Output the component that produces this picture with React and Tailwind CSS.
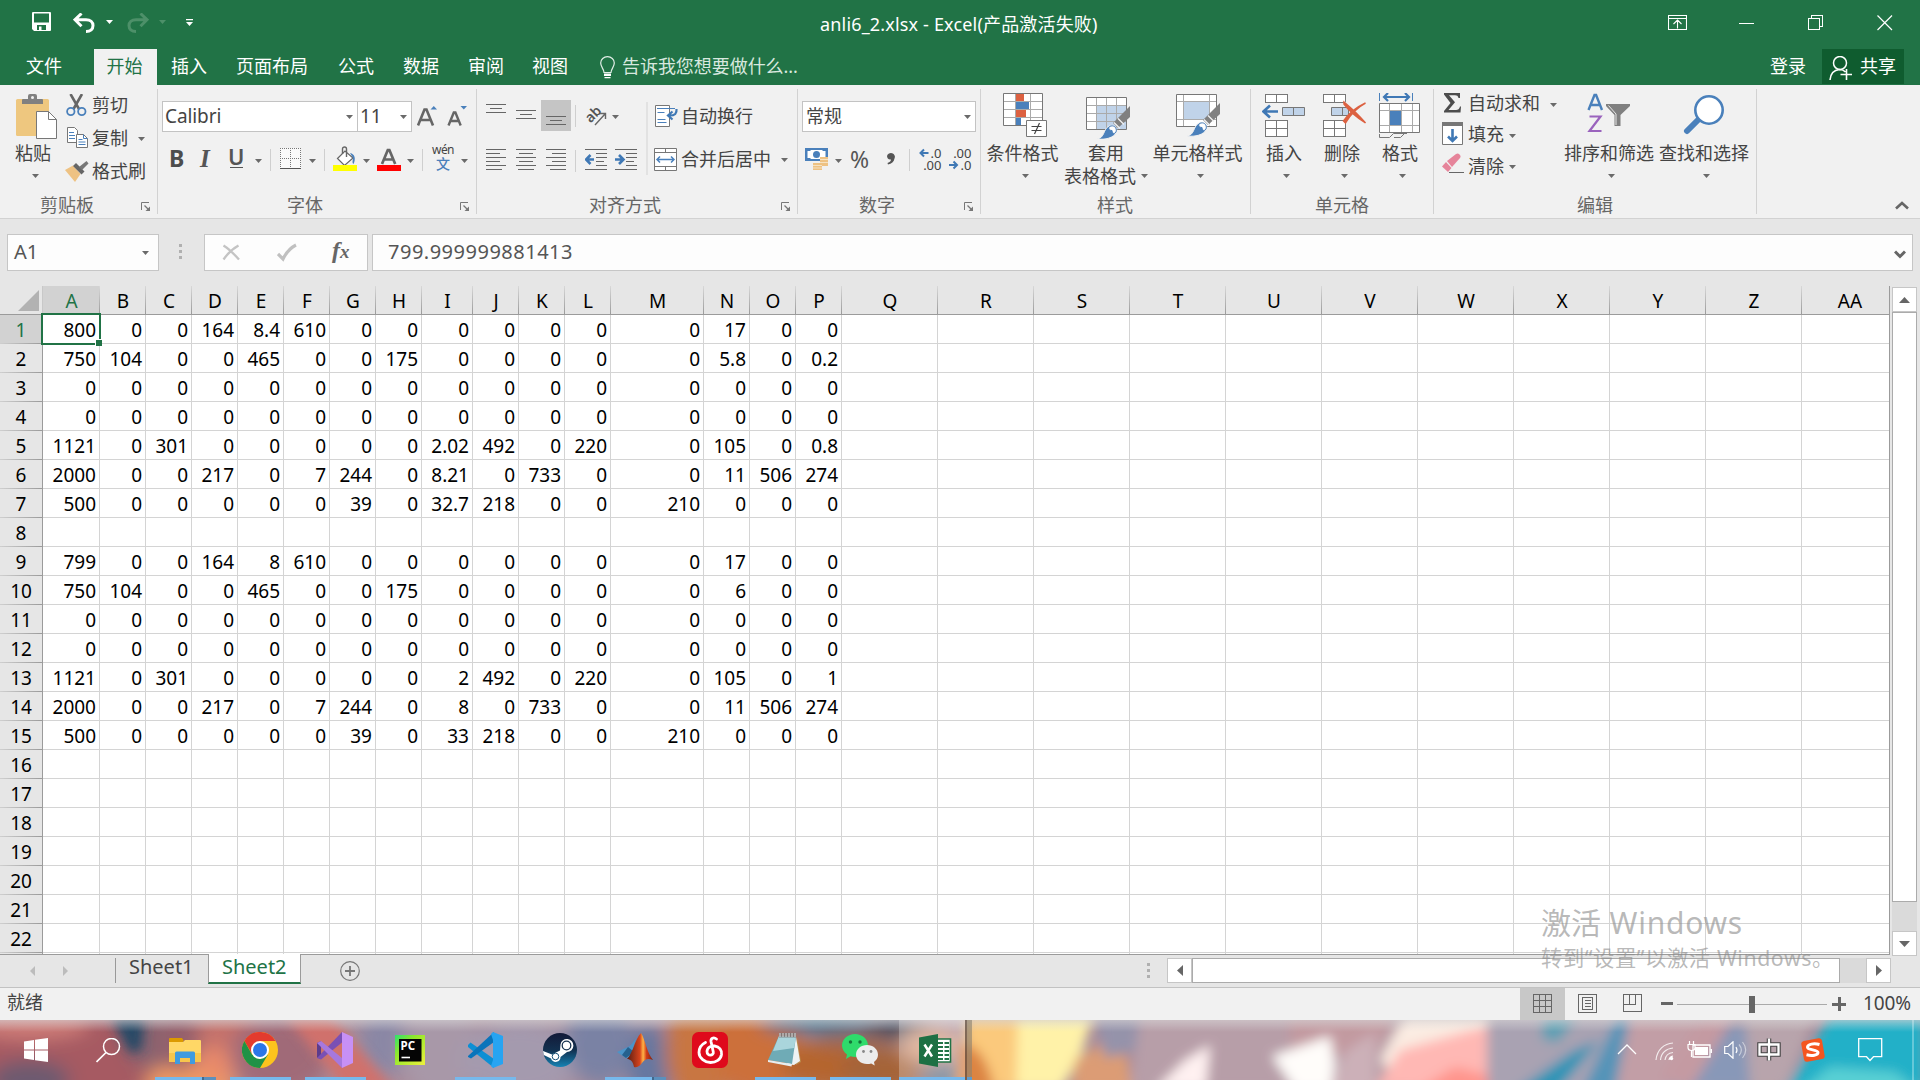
import React from "react";

const UI = "font-['Noto_Sans','Noto_Sans_CJK_SC',sans-serif]";

const columns = [
  ["A", "w-[57px]"], ["B", "w-[46px]"], ["C", "w-[46px]"], ["D", "w-[46px]"], ["E", "w-[46px]"],
  ["F", "w-[46px]"], ["G", "w-[46px]"], ["H", "w-[46px]"], ["I", "w-[51px]"], ["J", "w-[46px]"],
  ["K", "w-[46px]"], ["L", "w-[46px]"], ["M", "w-[93px]"], ["N", "w-[46px]"], ["O", "w-[46px]"],
  ["P", "w-[46px]"], ["Q", "w-[96px]"], ["R", "w-[96px]"], ["S", "w-[96px]"], ["T", "w-[96px]"],
  ["U", "w-[96px]"], ["V", "w-[96px]"], ["W", "w-[96px]"], ["X", "w-[96px]"], ["Y", "w-[96px]"],
  ["Z", "w-[96px]"], ["AA", "w-[96px]"],
];

const data = [
  "800 0 0 164 8.4 610 0 0 0 0 0 0 0 17 0 0",
  "750 104 0 0 465 0 0 175 0 0 0 0 0 5.8 0 0.2",
  "0 0 0 0 0 0 0 0 0 0 0 0 0 0 0 0",
  "0 0 0 0 0 0 0 0 0 0 0 0 0 0 0 0",
  "1121 0 301 0 0 0 0 0 2.02 492 0 220 0 105 0 0.8",
  "2000 0 0 217 0 7 244 0 8.21 0 733 0 0 11 506 274",
  "500 0 0 0 0 0 39 0 32.7 218 0 0 210 0 0 0",
  "",
  "799 0 0 164 8 610 0 0 0 0 0 0 0 17 0 0",
  "750 104 0 0 465 0 0 175 0 0 0 0 0 6 0 0",
  "0 0 0 0 0 0 0 0 0 0 0 0 0 0 0 0",
  "0 0 0 0 0 0 0 0 0 0 0 0 0 0 0 0",
  "1121 0 301 0 0 0 0 0 2 492 0 220 0 105 0 1",
  "2000 0 0 217 0 7 244 0 8 0 733 0 0 11 506 274",
  "500 0 0 0 0 0 39 0 33 218 0 0 210 0 0 0",
  "", "", "", "", "", "", "", "",
].map((r) => (r ? r.split(" ") : []));

function Svg({ w, h, className = "", children, crisp }) {
  return (
    <svg width={w} height={h} viewBox={`0 0 ${w} ${h}`} fill="none" className={`block shrink-0 ${className}`} shapeRendering={crisp ? "crispEdges" : "auto"}>
      {children}
    </svg>
  );
}

const Caret = ({ className = "", color = "#6a6a6a" }) => (
  <Svg w={7} h={4} className={className}><path d="M0 0h7L3.500 4z" fill={color} /></Svg>
);

const Launcher = ({ className = "" }) => (
  <Svg w={10} h={10} className={className}>
    <path d="M.5 8V.5H8" stroke="#777" />
    <path d="M3.500 3.500l4 4" stroke="#777" strokeWidth="1.200" />
    <path d="M9 4.500V9H4.500z" fill="#777" />
  </Svg>
);

/* ---------- Title bar ---------- */
function TitleBar() {
  return (
    <div className="flex h-[49px] items-start text-white">
      <Svg w={19} h={19} className="mt-3 ml-8">
        <path d="M1 0h17a1 1 0 0 1 1 1v17a1 1 0 0 1-1 1H2l-2-2V1a1 1 0 0 1 1-1z" fill="#fff" />
        <path d="M2 1.500h15v9H2zM5 13h9v5H9.500v-3.500H7V18H5z" fill="#217346" />
      </Svg>
      <Svg w={22} h={20} className="mt-[13px] ml-[22px]">
        <path d="M8.500 .5 2 6.700l6.500 6.500M2.500 6.700H13c4.500 0 7 2.500 7 5.800 0 3.500-2.500 6-7 6" stroke="#fff" strokeWidth="3" />
      </Svg>
      <Caret className="mt-5 ml-[11px]" color="#fff" />
      <Svg w={22} h={20} className="mt-[13px] ml-[14px]">
        <path d="M13.500 .5 20 6.700l-6.500 6.500M19.500 6.700H9C4.500 6.700 2 9.200 2 12.500c0 3.500 2.500 6 7 6" stroke="#4d9069" strokeWidth="3" />
      </Svg>
      <Caret className="mt-5 ml-[10px]" color="#4d9069" />
      <Svg w={8} h={8} className="mt-[19px] ml-5"><path d="M0 0h7v1.300H0zM0 3h7L3.500 7z" fill="#fff" /></Svg>
      <div className="ml-[626px] mt-[9px] w-[277px] whitespace-nowrap text-[18px] leading-[30px] tracking-[0.17px]">anli6_2.xlsx - Excel(产品激活失败)</div>
      <Svg w={19} h={15} className="mt-[15px] ml-[571px]">
        <path d="M.5.5h18v14H.5zM.5 3.500h18M9.500 13.500V5.500M5.500 9l4-4 4 4" stroke="#fff" strokeWidth="1.100" />
      </Svg>
      <Svg w={15} h={15} className="mt-[15px] ml-[52px]" crisp><path d="M0 8.500h15" stroke="#fff" /></Svg>
      <Svg w={16} h={16} className="mt-[15px] ml-[54px]" crisp>
        <path d="M.5 3.500h11v11H.5zM3.500 3.500v-3h11v11h-3" stroke="#fff" />
      </Svg>
      <Svg w={16} h={16} className="mt-[15px] ml-[53px]"><path d="M.5.5l14.500 14.500M15 .5.5 15" stroke="#fff" strokeWidth="1.200" /></Svg>
    </div>
  );
}

function TabBar() {
  return (
    <div className="flex h-9 text-[18px] leading-[34px] whitespace-nowrap text-white">
      <div className="w-[94px] pl-[26px]">文件</div>
      <div className="w-[63px] bg-[#f1f1f1] pr-[2px] text-center text-[#217346]">开始</div>
      <div className="flex pl-[14px]">
        <div className="w-[65px]">插入</div>
        <div className="w-[102px]">页面布局</div>
        <div className="w-[65px]">公式</div>
        <div className="w-[65px]">数据</div>
        <div className="w-[64px]">审阅</div>
        <div className="w-[68px]">视图</div>
      </div>
      <Svg w={15} h={23} className="mt-[7px]">
        <path d="M4 16.500c0-3.500-3.300-5.500-3.300-9.500a6.800 6.300 0 0 1 13.600 0c0 4-3.300 6-3.300 9.500z" stroke="#e3efe8" strokeWidth="1.200" />
        <path d="M4 17.500h7v2.500H4zM4.500 21h6v1.300h-6z" fill="#fff" />
      </Svg>
      <div className="ml-[7px] w-[1148px] tracking-[-0.05px] text-[#d8e8df]">告诉我您想要做什么...</div>
      <div className="w-[52px]">登录</div>
      <div className="flex h-[35px] w-[82px] bg-[#0f5c2f] pl-[7px]">
        <Svg w={24} h={25} className="mt-[7px]">
          <circle cx="11" cy="7" r="6.500" stroke="#fff" strokeWidth="1.500" />
          <path d="M1 24c.5-6.500 4-10 9.500-10.500 3 0 4.500.8 6 2.500M17.500 13v11M11.500 18.500H23" stroke="#fff" strokeWidth="1.600" />
        </Svg>
        <span className="ml-[7px]">共享</span>
      </div>
    </div>
  );
}

/* ---------- Ribbon ---------- */
function Group({ w, label, labelPad, launcher, children }) {
  return (
    <div className={`${w} flex h-[133px] shrink-0`}>
      <div className="flex min-w-0 flex-1 flex-col">
        <div className="h-[107px]">{children}</div>
        <div className="flex h-[26px] text-[18px] leading-[26px] text-[#666]">
          <span className={`${labelPad} flex-1 whitespace-nowrap`}>{label}</span>
          {launcher && <Launcher className="mt-[10px] mr-[6px]" />}
        </div>
      </div>
      <div className="mt-1 h-[125px] w-px bg-[#d2d2d2]" />
    </div>
  );
}

const VSep = ({ className = "" }) => <div className={`w-px bg-[#cfcfcf] ${className}`} />;

function Clipboard() {
  return (
    <Group w="w-[158px]" label="剪贴板" labelPad="pl-[40px]" launcher>
      <div className="flex">
        <div className="w-[65px] pl-[15px]">
          <Svg w={43} h={46} className="mt-[9px]">
            <rect x="1" y="5" width="33" height="37" rx="1.500" fill="#eec77f" />
            <path d="M7 10V6a1 1 0 0 1 1-1h5V2a2 2 0 0 1 2-2h5a2 2 0 0 1 2 2v3h5a1 1 0 0 1 1 1v4z" fill="#808080" />
            <circle cx="17.500" cy="3.500" r="1.500" fill="#f1f1f1" />
            <path d="M21.500 17.500h12l8 8v19h-20z" fill="#fff" stroke="#777" />
            <path d="M33.500 17.500v8h8" stroke="#777" />
          </Svg>
          <div className="text-[18px] leading-[26px] whitespace-nowrap">粘贴</div>
          <Caret className="mt-[8px] ml-[17px]" />
        </div>
        <div className="pt-[4px] text-[18px] leading-[33px] whitespace-nowrap">
          <div className="flex h-[33px]">
            <Svg w={27} h={24} className="mt-[5px]">
              <path d="M5.500 0 14 15M17 0 8.500 15" stroke="#666" strokeWidth="2.600" />
              <circle cx="5.800" cy="17.500" r="3.700" stroke="#4a80bb" strokeWidth="1.800" />
              <circle cx="16.800" cy="17.500" r="3.700" stroke="#4a80bb" strokeWidth="1.800" />
            </Svg>剪切
          </div>
          <div className="flex h-[33px]">
            <Svg w={27} h={24} className="mt-[4px]">
              <path d="M2.500 1.500h7l3 3v12h-10z" fill="#fff" stroke="#777" />
              <path d="M4 6.500h5M4 9.500h6M4 12.500h6" stroke="#4a80bb" />
              <path d="M11.500 8.500h7l4 4v9h-11z" fill="#fff" stroke="#777" />
              <path d="M18.500 8.500v4h4M13.500 13.500h4M13.500 16h7M13.500 18.500h7" stroke="#4a80bb" />
            </Svg>复制<Caret className="mt-[15px] ml-[10px]" />
          </div>
          <div className="flex h-[33px]">
            <Svg w={27} h={24} className="mt-[5px]">
              <path d="M0 10l8-4.500L15.500 14 10 22z" fill="#eec283" />
              <path d="M8 6l3-3 8.500 8.500-3 3z" fill="#666" />
              <path d="M14 7l7.500-6 2 2.500L17 10z" fill="#777" />
            </Svg>格式刷
          </div>
        </div>
      </div>
    </Group>
  );
}

function FontGroup() {
  return (
    <Group w="w-[319px]" label="字体" labelPad="pl-[129px]" launcher>
      <div className="flex pt-4 pl-1">
        <div className="flex h-[31px] w-[196px] border border-[#c3c3c3] bg-white text-[19px] leading-[28px]">
          <span className="w-[183px] pl-[2px] tracking-[-0.1px]">Calibri</span><Caret className="mt-[13px]" />
        </div>
        <div className="-ml-px flex h-[31px] w-[55px] border border-[#c3c3c3] bg-white text-[19px] leading-[28px]">
          <span className="w-[42px] pl-[2px]">11</span><Caret className="mt-[13px]" />
        </div>
        <Svg w={21} h={24} className="mt-[3px] ml-[5px]">
          <path d="M1 21.500 7.500 5.500h2L16 21.500M3.500 16h10" stroke="#666" strokeWidth="2.600" /><path d="M13.500 5.500h6.500l-3.200-3.500z" fill="#4a80bb" />
        </Svg>
        <Svg w={21} h={24} className="mt-[3px] ml-[9px]">
          <path d="M1.500 21.500 6.800 8.500h1.600L13.700 21.500M4 17h7.500" stroke="#666" strokeWidth="2.400" /><path d="M13.500 2h6.500l-3.200 3.500z" fill="#4a80bb" />
        </Svg>
      </div>
      <div className="flex h-10 items-start pt-[12px] pl-[11px]">
        <div className="w-[31px] font-['Noto_Sans'] text-[23px] leading-[28px] font-bold text-[#4d4d4d]">B</div>
        <div className="w-[28px] font-['Liberation_Serif'] text-[25px] leading-[29px] font-bold italic text-[#555]">I</div>
        <div className="w-[28px] border-[#555]">
          <div className="w-[16px] text-[22px] leading-[25px] font-semibold text-[#555]">U</div>
          <div className="-mt-[2px] ml-[2px] h-px w-[13px] bg-[#555]" />
        </div>
        <Caret className="mt-[15px] -ml-px" />
        <VSep className="mt-[5px] ml-[8px] h-[22px]" />
        <Svg w={22} h={22} className="mt-[4px] ml-[9px]" crisp>
          <rect x="0" y="0" width="21" height="21" fill="#fafafa" />
          <path d="M0 .5h21M0 10.500h21M.5 0v21M10.500 0v21M20.500 0v21" stroke="#777" strokeDasharray="1 1" />
          <path d="M0 20.500h21" stroke="#555" />
        </Svg>
        <Caret className="mt-[15px] ml-[7px]" />
        <VSep className="mt-[5px] ml-[8px] h-[22px]" />
        <Svg w={24} h={26} className="mt-[2px] ml-[8px]">
          <path d="M4.500 12.500 12 5l8 7-8.500 7.500z" fill="#fff" stroke="#666" strokeWidth="1.200" />
          <path d="M9.500 8V3a2 2 0 0 1 4 0v8" stroke="#666" strokeWidth="1.400" />
          <path d="M17 7c5 1 6 6 3.500 11-1.800-1.500-.5-4-.5-6z" fill="#4a80bb" />
          <rect y="19" width="24" height="6" fill="#ff0" />
        </Svg>
        <Caret className="mt-[15px] ml-[6px]" />
        <Svg w={24} h={26} className="mt-[2px] ml-[7px]">
          <path d="M5 18 10.800 4h1.600L18.200 18M7.500 13.500h8.500" stroke="#666" strokeWidth="2.700" />
          <rect y="19" width="24" height="6" fill="#f00" />
        </Svg>
        <Caret className="mt-[15px] ml-[6px]" />
        <VSep className="mt-[5px] ml-[8px] h-[22px]" />
        <div className="-mt-px ml-[8px] flex w-[24px] flex-col items-center text-[12px] leading-[14px] text-[#444]">
          <span className="tracking-[-0.6px]">wén</span>
          <span className="text-[14px] leading-[13px] font-medium text-[#4a80bb]">文</span>
        </div>
        <Caret className="mt-[15px] ml-[6px]" />
      </div>
    </Group>
  );
}

const threeLines = [[0, 20], [4, 12], [0, 20]];

function Lines({ y0, gap, rows, w = 20, h = 31, className = "" }) {
  return (
    <Svg w={w} h={h} className={className} crisp>
      {rows.map(([x, len], i) => <rect key={i} x={x} y={y0 + gap * i} width={len} height="1" fill="#666" />)}
    </Svg>
  );
}

function AlignGroup() {
  return (
    <Group w="w-[321px]" label="对齐方式" labelPad="pl-[112px]" launcher>
      <div className="flex">
        <div className="w-[169px]">
          <div className="flex pt-[15px] pl-[9px]">
            <Lines y0={4} gap={4} rows={threeLines} />
            <Lines y0={10} gap={4} rows={threeLines} className="ml-[10px]" />
            <div className="ml-[5px] w-[30px] bg-[#c5c5c5] pl-[5px]"><Lines y0={16} gap={4} rows={threeLines} /></div>
            <VSep className="mt-[5px] ml-[4px] h-[22px]" />
            <Svg w={21} h={22} className="mt-[4px] ml-[10px] overflow-visible">
              <text x="-2" y="14" transform="rotate(-45 8 9)" fontSize="14" fontFamily="Noto Sans" fontWeight="600" fill="#555">ab</text>
              <path d="M9 21 19 10M19.500 15V9.500H14" stroke="#666" strokeWidth="1.400" />
            </Svg>
            <Caret className="mt-[15px] ml-[5px]" />
          </div>
          <div className="flex pt-[18px] pl-[9px]">
            <Lines h={22} y0={0} gap={4} rows={[[0, 20], [0, 14], [0, 20], [0, 14], [0, 20], [0, 16]]} />
            <Lines h={22} y0={0} gap={4} rows={[[0, 20], [3, 14], [0, 20], [3, 14], [0, 20], [2, 16]]} className="ml-[10px]" />
            <Lines h={22} y0={0} gap={4} rows={[[0, 20], [6, 14], [0, 20], [6, 14], [0, 20], [4, 16]]} className="ml-[10px]" />
            <VSep className="mt-[1px] ml-[9px] h-[22px]" />
            <div className="ml-[9px] flex">
              {["M9 10.500H1M5.500 6 1 10.500 5.500 15", "M0 10.500h8M4 6l4.500 4.500L4 15"].map((d, i) => (
                <Svg key={i} w={22} h={22} className="mr-2">
                  <path d="M0 .5h22M11 4.500h11M11 8.500h11M11 12.500h8M11 16.500h11M0 20.500h22" stroke="#666" />
                  <path d={d} stroke="#3f78b5" strokeWidth="2.600" />
                </Svg>
              ))}
            </div>
          </div>
        </div>
        <div className="mt-[17px] h-[73px] w-[2px] bg-[#e2e2e2]" />
        <div className="pl-[6px] text-[18px] leading-[31px] whitespace-nowrap">
          <div className="flex pt-[16px]">
            <Svg w={27} h={24} className="mt-[4px]">
              <path d="M1.500.5h14v21h-14z" fill="#fff" stroke="#777" />
              <path d="M3 3.500h18M3.500 7.500h7M3.500 14.500h8M3.500 17.500h9" stroke="#4a80bb" />
              <path d="M22.500 4c.5 4.500-1.500 6.500-7 6.500M18.500 6.500l-4.500 4 4.500 4" stroke="#3f78b5" strokeWidth="2.200" />
            </Svg>自动换行
          </div>
          <div className="flex pt-[11px]">
            <Svg w={27} h={24} className="mt-[5px]">
              <path d="M.5.5h22v22H.5z" fill="#fff" stroke="#777" />
              <path d="M.5 4.500h22M.5 18.500h22M11.500.5v4M11.500 18.500v4" stroke="#777" />
              <path d="M3 11.500h17M6 8.500l-3 3 3 3M17 8.500l3 3-3 3" stroke="#4a80bb" strokeWidth="1.500" />
            </Svg><span className="pt-px">合并后居中</span><Caret className="mt-[15px] ml-[10px]" />
          </div>
        </div>
      </div>
    </Group>
  );
}

function DecIcon({ top, bottom, arrow, arrowY, className = "" }) {
  return (
    <Svg w={23} h={24} className={`overflow-visible ${className}`}>
      <text x="22.500" y="9.500" textAnchor="end" fontSize="13" fontFamily="Noto Sans" fill="#444">{top}</text>
      <text x="22.500" y="22" textAnchor="end" fontSize="13" fontFamily="Noto Sans" fill="#444">{bottom}</text>
      <path d={arrow} transform={`translate(0 ${arrowY})`} stroke="#3f78b5" strokeWidth="2" />
    </Svg>
  );
}

function NumberGroup() {
  return (
    <Group w="w-[183px]" label="数字" labelPad="pl-[61px]" launcher>
      <div className="pt-4 pl-1">
        <div className="flex h-[31px] w-[174px] border border-[#c3c3c3] bg-white text-[18px] leading-[28px]">
          <span className="w-[161px] pl-[3px]">常规</span><Caret className="mt-[13px]" />
        </div>
      </div>
      <div className="flex pt-[16px] pl-[7px]">
        <Svg w={24} h={24}>
          <rect width="23" height="13" fill="#4a80bb" /><path d="M2.500 3h3V2h12v1h3v7h-3v1h-12v-1h-3z" fill="#fff" /><circle cx="11.500" cy="6.500" r="3.500" fill="#4a80bb" />
          <path d="M15 9h8v9h-8z" fill="#eec283" /><path d="M8 15h9v7H8z" fill="#eec283" />
          <path d="M15 11.500h8M15 14.500h8M8 17.500h9M8 20h9" stroke="#f8ead2" strokeWidth=".8" />
        </Svg>
        <Caret className="mt-[11px] ml-[6px]" />
        <div className="-mt-[3px] ml-[8px] w-[21px] font-['Noto_Sans'] text-[23px] leading-[28px] text-[#555]">%</div>
        <Svg w={11} h={16} className="mt-[4px] ml-[15px]"><path d="M1 4a4 3.800 0 1 1 7.500 2.500C8 10 5.500 11.800 2 12.500l-.5-1.500C4 10 5 9 5 7.500 2.500 8 1 6 1 4z" fill="#555" /></Svg>
        <VSep className="mt-[1px] ml-[12px] h-[22px]" />
        <DecIcon top=".0" bottom=".00" arrow="M9.500 5H2M5 1.500 1.500 5 5 8.500" arrowY={0} className="ml-[9px]" />
        <DecIcon top=".00" bottom=".0" arrow="M0 5h7.500M4.500 1.500 8 5 4.500 8.500" arrowY={12} className="ml-[7px]" />
      </div>
    </Group>
  );
}

function Big({ w, icon, label, labelShift = "", caretShift = "" }) {
  return (
    <div className={`${w} flex shrink-0 flex-col items-center text-[18px] leading-[26px] whitespace-nowrap`}>
      <div className="flex h-[55px] items-start pt-[8px]">{icon}</div>
      <div className={labelShift}>{label}</div>
      <Caret className={`mt-[8px] ${caretShift}`} />
    </div>
  );
}

const Brush = ({ x, y }) => (
  <g transform={`translate(${x} ${y})`}>
    <path d="M33 0v11L21 22l-5-5z" fill="#808080" />
    <path d="M17 16.500l6 6M21 12.500l6 6" stroke="#f1f1f1" strokeWidth="1.300" />
    <path d="M0 33c8-1 6-10 12-13 5-2 9 2 7.500 6C17 32 8 34 0 33z" fill="#4a80bb" stroke="#f1f1f1" />
    <path d="M12.500 20.500c4-2 8 1 6.500 5.500-2.500 3-3.500 1-4-1.500-3 0-4-2-2.500-4z" fill="#fff" stroke="#4a80bb" />
  </g>
);

function StylesGroup() {
  return (
    <Group w="w-[270px]" label="样式" labelPad="pl-[116px]">
      <div className="flex pl-[5px]">
        <Big w="w-[74px]" label="条件格式" labelShift="mr-px" caretShift="ml-[5px]" icon={
          <Svg w={44} h={45} className="ml-[3px]">
            <path d="M.5.5h39v32H.5z" fill="#fff" stroke="#777" />
            <path d="M1 8.500h38M1 16.500h38M1 24.500h38M12.500 1v31M27.500 1v31" stroke="#aaa" />
            <path d="M13 1h8v7h-8zM13 17h10v7H13z" fill="#dc6141" /><path d="M13 9h13v7H13zM13 25h5v7h-5z" fill="#4a80bb" />
            <path d="M23.500 27.500h20v16h-20z" fill="#fff" stroke="#777" />
            <path d="M28.500 33.500h10M28.500 37.500h10M36.500 30l-5 11" stroke="#444" strokeWidth="1.200" />
          </Svg>} />
        <div className="w-[93px] pl-[4px] text-[18px] leading-[26px] whitespace-nowrap">
          <div className="h-[55px] pt-[11px] pl-[22px]">
            <Svg w={45} h={43}>
              <path d="M.5 1.500h40v32H.5z" fill="#fff" stroke="#777" />
              <path d="M11 10h29v23H11z" fill="#c0d3e9" />
              <path d="M1 9.500h39M1 17.500h39M1 25.500h39M10.500 2v31M20.500 2v31M30.500 2v31" stroke="#aaa" />
              <Brush x={11} y={10} />
            </Svg>
          </div>
          <div className="pl-[24px]">套用</div>
          <div className="-mt-[3px] flex">表格格式<Caret className="mt-[11px] ml-[5px]" /></div>
        </div>
        <Big w="w-[90px]" label="单元格样式" labelShift="mr-px" caretShift="ml-[5px]" icon={
          <Svg w={45} h={44} className="ml-px">
            <path d="M.5 1.500h40v32H.5z" fill="#fff" stroke="#777" />
            <path d="M1 8.500h39M1 26.500h39M7.500 2v31M33.500 2v31" stroke="#aaa" /><path d="M8 9h25v17H8z" fill="#c0d3e9" />
            <Brush x={11} y={10} />
          </Svg>} />
      </div>
    </Group>
  );
}

const Blocks = ({ x, y, rows = 1 }) => (
  <g>
    <rect x={x + 0.5} y={y + 0.5} width="22" height={8 * rows} fill="#fff" stroke="#777" />
    <path d={`M${x + 11.5} ${y}v${8 * rows}${rows > 1 ? `M${x} ${y + 8.5}h22` : ""}`} stroke="#777" />
  </g>
);

function CellsGroup() {
  return (
    <Group w="w-[183px]" label="单元格" labelPad="pl-[64px]">
      <div className="flex pl-[7px]">
        <Big w="w-[58px]" label="插入" labelShift="mr-[6px]" caretShift="mr-px" icon={
          <Svg w={44} h={44} className="-ml-[6px]">
            <Blocks x={3} y={1} /><Blocks x={3} y={27} rows={2} />
            <path d="M20.500 14.500h22v8h-22z" fill="#c0d3e9" stroke="#777" /><path d="M31.500 14v8" stroke="#777" />
            <path d="M16 18.500H2M8 12.500l-6.500 6L8 24.500" stroke="#3f78b5" strokeWidth="2.600" />
          </Svg>} />
        <Big w="w-[58px]" label="删除" labelShift="mr-[6px]" caretShift="mr-px" icon={
          <Svg w={44} h={44}>
            <Blocks x={0} y={1} /><Blocks x={0} y={27} rows={2} />
            <path d="M8.500 14.500h17v8h-17z" fill="#c0d3e9" stroke="#777" /><path d="M19.500 14v8" stroke="#777" />
            <path d="M22 9.500 42 30M42 11 22 28" stroke="#f1f1f1" strokeWidth="5" />
            <path d="M21 9c6 5 14 12 21.500 21C35 25 26 18 21 11zM42.500 10C35 14 28 20 22.500 30l-2-2C26 20 34 14 42.500 10z" fill="#dc6141" stroke="#dc6141" strokeWidth="1.500" />
          </Svg>} />
        <Big w="w-[58px]" label="格式" labelShift="mr-[6px]" caretShift="mr-px" icon={
          <Svg w={42} h={46} className="-ml-[6px]">
            <path d="M.5 0v8M33.500 0v8" stroke="#4a80bb" /><path d="M5 4h25M9 0 5 4l4 4M26 0l4 4-4 4" stroke="#3f78b5" strokeWidth="2.200" />
            <path d="M.5 10.500h40v29H.5z" fill="#fff" stroke="#777" />
            <path d="M1 17.500h39M1 32.500h39M10.500 11v28M22.500 11v28M33.500 11v28" stroke="#aaa" /><path d="M11 18h11v14H11z" fill="#4a80bb" />
            <path d="M.5 41v3.500h10l4-4h11l-4 4H15M25 40.500h3" stroke="#777" />
          </Svg>} />
      </div>
    </Group>
  );
}

function EditGroup() {
  return (
    <Group w="w-[323px]" label="编辑" labelPad="pl-[143px]">
      <div className="flex pl-[8px]">
        <div className="w-[122px] pt-[4px] text-[18px] leading-[31px] whitespace-nowrap">
          <div className="flex h-[31px]">
            <Svg w={26} h={22} className="mt-[4px]"><path d="M2 0h16v5h-1.500C16 3 15 2.300 13 2.300H7l6 7L6.500 17H14c2 0 3.500-1 4-3.500h1l-.5 6H2v-1.500L8.500 10 2 1.500z" fill="#4d4d4d" /></Svg>
            <span className="-mt-px">自动求和</span><Caret className="mt-[14px] ml-[10px]" />
          </div>
          <div className="flex h-[31px]">
            <Svg w={26} h={24} className="mt-[2px]">
              <path d="M.5.5h20v22H.5z" fill="#fff" stroke="#777" /><path d="M0 0h21v4H0z" fill="#777" />
              <path d="M10.500 7v12M6 14.500l4.500 4.500 4.500-4.500" stroke="#3f78b5" strokeWidth="2.600" />
            </Svg><span className="-mt-px">填充</span><Caret className="mt-[14px] ml-[5px]" />
          </div>
          <div className="flex h-[31px]">
            <Svg w={26} h={22} className="mt-[2px]">
              <path d="M5 8 14 1c1.500-1 2.500-.5 3.500.5s1.500 2 .5 3.500L10 14z" fill="#e6849a" /><path d="M4 9 0 13.500 6 19l3.500-4z" fill="#e6849a" />
              <path d="M7 19.500h15" stroke="#666" />
            </Svg>清除<Caret className="mt-[14px] ml-[5px]" />
          </div>
        </div>
        <Big w="w-[95px]" label="排序和筛选" labelShift="mr-[5px]" icon={
          <Svg w={44} h={42} className="-ml-[5px]">
            <path d="M1.500 17 7.500 2h1.600L15 17M4 12h9" stroke="#4a80bb" strokeWidth="2.400" />
            <path d="M2.500 23.500h11L2.500 38h12" stroke="#9a63bd" strokeWidth="2.200" />
            <path d="M19 11h24v2l-9.500 9v11h-6V22L19 13z" fill="#808080" /><path d="M21.500 12.500l7.500 8.500v11" stroke="#e8e8e8" />
          </Svg>} />
        <Big w="w-[95px]" label="查找和选择" labelShift="mr-[5px]" icon={
          <Svg w={42} h={42} className="-ml-[5px]">
            <path d="M17 25 4 38" stroke="#4a80bb" strokeWidth="6" strokeLinecap="round" />
            <circle cx="26" cy="17" r="13.700" fill="#fff" stroke="#4a80bb" strokeWidth="2.600" />
          </Svg>} />
      </div>
    </Group>
  );
}

function Ribbon() {
  return (
    <div className="flex h-[134px] border-b border-[#d2d2d2] bg-[#f1f1f1] text-[#444]">
      <Clipboard /><FontGroup /><AlignGroup /><NumberGroup /><StylesGroup /><CellsGroup /><EditGroup />
      <Svg w={14} h={9} className="mt-[116px] ml-[138px]"><path d="M1 7.500 7 2l6 5.500" stroke="#666" strokeWidth="2.600" /></Svg>
    </div>
  );
}

/* ---------- Formula bar ---------- */
function FormulaBar() {
  return (
    <div className="flex h-[67px] bg-[#e6e6e6] pt-[15px] pl-[7px] text-[#555]">
      <div className="flex h-[37px] w-[152px] border border-[#c6c6c6] bg-[#fdfdfd] pl-[6px] text-[20px] leading-[34px]">
        <span className="w-[128px]">A1</span><Caret className="mt-[16px]" />
      </div>
      <Svg w={3} h={16} className="mt-[10px] ml-[20px]" crisp><path d="M0 0h3v3H0zM0 6h3v3H0zM0 12h3v3H0z" fill="#b0b0b0" /></Svg>
      <div className="ml-[22px] flex h-[37px] w-[164px] border border-[#c6c6c6] bg-[#fdfdfd]">
        <Svg w={19} h={19} className="mt-[8px] ml-[17px]"><path d="M1.500 2.500c4 2.500 11 9 15.500 14M16.500 2.500C12 5 5 11.500 1.500 16.500" stroke="#c4c4c4" strokeWidth="2.300" /></Svg>
        <Svg w={20} h={19} className="mt-[8px] ml-[36px]"><path d="M1 11l5 5C9 10 13 5 19 2" stroke="#c0c0c0" strokeWidth="3.200" /></Svg>
        <div className="ml-[35px] font-['Liberation_Serif'] text-[24px] leading-[30px] font-bold italic text-[#666]">f<span className="text-[19px]">x</span></div>
      </div>
      <div className="ml-[4px] flex h-[37px] w-[1541px] border border-[#c6c6c6] bg-[#fdfdfd] text-[20px] leading-[34px]">
        <span className="w-[1521px] pl-[15px] tracking-[0.5px]">799.999999881413</span>
        <Svg w={12} h={9} className="mt-[15px]"><path d="M1 1.500l5 5 5-5" stroke="#666" strokeWidth="3" /></Svg>
      </div>
    </div>
  );
}

/* ---------- Sheet ---------- */
function Sheet() {
  return (
    <div className="flex h-[669px] bg-[#e6e6e6] text-[19px]">
      <div className="h-[669px] w-[1890px] overflow-hidden border-r border-b border-[#9b9b9b]">
        <div className="flex h-[29px] w-max border-b border-[#9b9b9b] leading-[28px] text-black">
          <div className="flex w-[43px] justify-end border-r border-[#c8c8c8] pt-[4px] pr-[3px]">
            <Svg w={21} h={21}><path d="M21 0v21H0z" fill="#b2b2b2" /></Svg>
          </div>
          {columns.map(([name, w]) => (
            <div key={name} className={`${w} flex shrink-0 ${name === "A" ? "bg-[#d2d2d2] text-[#217346]" : ""}`}>
              <span className="flex-1 pt-px pl-px text-center">{name}</span>
              <span className="w-px bg-linear-to-b from-[#d8d8d8] to-[#9b9b9b]" />
            </div>
          ))}
        </div>
        {data.map((row, r) => (
          <div key={r} className="flex h-[29px] w-max leading-[31px] text-black">
            <div className={`flex w-[43px] flex-col border-r border-[#9b9b9b] ${r === 0 ? "bg-[#d2d2d2] text-[#217346]" : ""}`}>
              <span className="h-7 text-center">{r + 1}</span>
              <span className="h-px bg-linear-to-r from-[#cfcfcf] to-[#9b9b9b]" />
            </div>
            {columns.map(([name, w], c) => (
              <div key={name} className={`${w} relative h-[29px] shrink-0 border-r border-b border-[#d4d4d4] bg-white pr-[3px] text-right`}>
                {row[c]}
                {r === 0 && c === 0 && (
                  <>
                    <div className="absolute -top-[2px] -right-[2px] -bottom-[2px] -left-[2px] z-10 border-2 border-[#217346]" />
                    <div className="absolute -right-[3px] -bottom-[3px] z-20 h-[7px] w-[7px] border-t border-l border-white bg-[#217346]" />
                  </>
                )}
              </div>
            ))}
          </div>
        ))}
      </div>
      <div className="ml-[2px] flex w-[25px] flex-col pt-px">
        <div className="flex h-[25px] items-center justify-center border border-[#c6c6c6] bg-white"><Svg w={11} h={6}><path d="M0 6h11L5.500 0z" fill="#666" /></Svg></div>
        <div className="h-[590px] border border-[#ababab] bg-white" />
        <div className="flex-1 bg-[#dadada]" />
        <div className="-mb-px flex h-[25px] items-center justify-center border border-[#c6c6c6] bg-white"><Svg w={11} h={6}><path d="M0 0h11L5.500 6z" fill="#666" /></Svg></div>
      </div>
    </div>
  );
}

function SheetTabs() {
  return (
    <div className="flex h-[33px] border-b border-[#c2c2c2] bg-[#e6e6e6] text-[20px] leading-[24px] text-[#444]">
      <Svg w={5} h={10} className="mt-[11px] ml-[30px]"><path d="M5 0v10L0 5z" fill="#bcbcbc" /></Svg>
      <Svg w={5} h={10} className="mt-[11px] ml-[28px]"><path d="M0 0v10l5-5z" fill="#bcbcbc" /></Svg>
      <div className="mt-[3px] ml-[47px] h-[25px] w-px bg-[#999]" />
      <div className="w-[92px] pl-[13px]">Sheet1</div>
      <div className="-mt-px h-[30px] w-[93px] border-x border-b-2 border-x-[#9b9b9b] border-b-[#217346] bg-white pt-px pl-[13px] text-[#217346]">Sheet2</div>
      <Svg w={20} h={20} className="mt-[6px] ml-[39px]">
        <circle cx="10" cy="10" r="9.300" stroke="#777" strokeWidth="1.200" /><path d="M10 5v10M5 10h10" stroke="#777" strokeWidth="1.800" />
      </Svg>
      <Svg w={3} h={16} className="mt-[8px] ml-[787px]" crisp><path d="M0 0h3v3H0zM0 6h3v3H0zM0 12h3v3H0z" fill="#b0b0b0" /></Svg>
      <div className="mt-[3px] ml-[17px] flex h-[25px] w-[724px] bg-[#dadada]">
        <div className="flex w-[25px] items-center justify-center border border-[#c6c6c6] bg-white"><Svg w={6} h={11}><path d="M6 0v11L0 5.500z" fill="#666" /></Svg></div>
        <div className="w-[648px] border border-[#ababab] bg-white" />
        <div className="flex-1" />
        <div className="flex w-[25px] items-center justify-center border border-[#c6c6c6] bg-white"><Svg w={6} h={11}><path d="M0 0v11l6-5.500z" fill="#666" /></Svg></div>
      </div>
    </div>
  );
}

function StatusBar() {
  return (
    <div className="flex h-8 bg-[#f1f1f1] text-[18px] leading-[30px] text-[#444]">
      <div className="-mt-px w-[1520px] pl-[7px]">就绪</div>
      <div className="w-[45px] bg-[#c8c8c8] pt-[6px] pl-[13px]">
        <Svg w={19} h={19} crisp><path d="M.5.5h18v18H.5zM.5 6.500h18M.5 12.500h18M6.500.5v18M12.500.5v18" stroke="#666" /></Svg>
      </div>
      <Svg w={19} h={19} className="mt-[6px] ml-[13px]" crisp><path d="M.5.5h18v18H.5zM4.500 3.500h10v12h-10zM6.500 6.500h6M6.500 9.500h6M6.500 12.500h6" stroke="#666" /></Svg>
      <Svg w={19} h={19} className="mt-[6px] ml-[26px]" crisp><path d="M.5.5h18v17H.5zM.5 10.500h12v-10M6.500.5v10" stroke="#666" /></Svg>
      <div className="mt-[14px] ml-[19px] h-[3px] w-[12px] bg-[#666]" />
      <div className="ml-[4px] flex w-[150px] items-center">
        <div className="h-px w-[72px] bg-[#aaa]" /><div className="h-[17px] w-[6px] bg-[#666]" /><div className="h-px flex-1 bg-[#aaa]" />
      </div>
      <Svg w={14} h={14} className="mt-[9px] ml-[5px]" crisp><path d="M7 0v14M0 7h14" stroke="#666" strokeWidth="3" /></Svg>
      <div className="ml-[17px] text-[19px] tracking-[-0.15px]">100%</div>
    </div>
  );
}

/* ---------- Taskbar ---------- */
const blobs = [
  [60, 40, 110, 50, "#a65a62"], [30, 60, 40, 20, "#6d5a70"], [30, 5, 60, 14, "#cf7d78"], [150, 20, 25, 30, "#8a6470"], [190, 62, 45, 20, "#f09a62"], [220, 40, 25, 20, "#e88a6a"],
  [228, 10, 40, 20, "#c5726c"], [180, 20, 20, 30, "#94606c"], [280, 35, 50, 40, "#a06a78"], [385, 20, 25, 35, "#8a87a5"], [440, 30, 40, 50, "#a898a8"], [520, 40, 60, 40, "#a49aae"],
  [600, 20, 35, 45, "#7a82a4"], [650, 45, 22, 40, "#6577a0"], [700, 30, 35, 60, "#c87642"], [760, 30, 45, 50, "#cc703a"], [830, 45, 50, 25, "#b5652e"], [820, 2, 60, 12, "#3f7590"],
  [900, 10, 36, 13, "#23465f"], [855, 20, 40, 8, "#9c6a5a"], [890, 50, 50, 22, "#a56438"], [940, 55, 20, 15, "#5b7388"], [930, 25, 30, 18, "#d8a183"],
];

const streaks = [
  ["M110-5h35l-3 35-12 4z", "#254866"], ["M345 70 285-5h45l65 75z", "#d0716c"],
  ["M965-5h60v75h-60z", "#fbc97c"], ["M960 22c25 5 30 30 35 50h-40z", "#dc8442"], ["M1018-5h75l-12 40-20 35h-45z", "#fff2a8"], ["M1075 40l30-18 22 15 5 35h-60z", "#dc9c74"],
  ["M1095-5h50l-5 35-35 8z", "#9593aa"], ["M1140-5h260v75h-270z", "#b79ea8"], ["M1290-5h105l-20 40h-85z", "#c29aa0"],
  ["M1155 70l30-30 25-15-4 45z", "#fff1f1"], ["M1272 36l58-20 5 28-4 28h-35z", "#fffdfa"], ["M1330 72l15-40 30-20v60z", "#ccb0b8"],
  ["M1380 40 1405-5h90l-25 35-60 42z", "#fbece2"], ["M1375 70 1400 30l90-25v65z", "#ffb8b4"], ["M1415 72l40-25 40 10v20z", "#ff948c"],
  ["M1487-5h200v80h-200z", "#a9a2b2"], ["M1543-5h35l-20 28-16-4z", "#5fa0b4"], ["M1510 75l65-45 25-10-45 55z", "#2c94b6"], ["M1580 75 1618-5h38l-42 80z", "#5494b8"],
  ["M1630-5h75l-40 75h-50z", "#c29ea6"], ["M1660 60l50-70h25l-40 80z", "#c49aa2"], ["M1690 70l40-65h20l15 65z", "#8898b8"], ["M1745-5h70l-30 75h-35z", "#b8a4ac"],
  ["M1785 72 1830-5h95v77z", "#22b0c8"], ["M1800 72l30-25 65 5 25 20z", "#58d0d4"],
];

function Wallpaper() {
  return (
    <svg width="1920" height="60" className="absolute inset-0">
      <defs>
        <filter id="soft" x="-5%" y="-60%" width="110%" height="220%"><feGaussianBlur stdDeviation="9" /></filter>
        <filter id="soft2" x="-5%" y="-60%" width="110%" height="220%"><feGaussianBlur stdDeviation="6" /></filter>
        <linearGradient id="fade" x1="0" y1="0" x2="0" y2="1"><stop offset="0" stopColor="#ddd" stopOpacity=".55" /><stop offset="1" stopColor="#ddd" stopOpacity="0" /></linearGradient>
      </defs>
      <rect width="1920" height="60" fill="#a98c9a" />
      <g filter="url(#soft)">{blobs.map(([x, y, rx, ry, f], i) => <ellipse key={i} cx={x} cy={y} rx={rx} ry={ry} fill={f} />)}</g>
      <g filter="url(#soft2)">{streaks.map(([d, f], i) => <path key={i} d={d} fill={f} />)}</g>
      <rect width="1920" height="12" fill="url(#fade)" />
    </svg>
  );
}

const Folder = () => (
  <Svg w={32} h={28}>
    <path d="M1 2h12l2 3h-1v4H0V3a1 1 0 0 1 1-1z" fill="#dc9a00" /><path d="M0 6h14l2-2h15a1 1 0 0 1 1 1v20a1 1 0 0 1-1 1H1a1 1 0 0 1-1-1z" fill="#ffd766" />
    <path d="M0 17h32v8a1 1 0 0 1-1 1H1a1 1 0 0 1-1-1z" fill="#f7c64c" /><path d="M6 28V17a1.500 1.500 0 0 1 1.500-1.500h17A1.500 1.500 0 0 1 26 17v11h-5v-6H11v6z" fill="#3f9be0" />
  </Svg>
);
const Chrome = () => (
  <Svg w={36} h={36}>
    <circle cx="18" cy="18" r="18" fill="#fcc31e" />
    <path d="M18 9h15.600A18 18 0 0 0 2.400 9L10 22z" fill="#e33b2e" />
    <path d="M2.400 9A18 18 0 0 0 18 36l8-13.500-8 4.500-8-4.500z" fill="#1f9246" />
    <circle cx="18" cy="18" r="9" fill="#fff" /><circle cx="18" cy="18" r="7" fill="#2a76e8" />
  </Svg>
);
const VisualStudio = () => (
  <Svg w={36} h={36}>
    <path d="M0 11l4-2v18l-4-1.500z" fill="#5d3c8c" />
    <path d="M4 27.500 0 26 25 0v10.500z" fill="#7a50b4" />
    <path d="M0 11 4 9l21 17v10z" fill="#a678de" />
    <path d="M25 0l11 5v26l-11 5z" fill="#c790f6" />
  </Svg>
);
const PyCharm = () => (
  <Svg w={30} h={30}>
    <defs><linearGradient id="pc" x1="0" y1="0" x2="1" y2="1"><stop offset="0" stopColor="#2fe070" /><stop offset=".35" stopColor="#8fe82c" /><stop offset="1" stopColor="#eef03c" /></linearGradient></defs>
    <rect width="30" height="30" fill="url(#pc)" /><rect x="4" y="4" width="22.500" height="22.500" fill="#050505" />
    <text x="5.500" y="15" fontSize="11.500" fontWeight="700" fontFamily="Noto Sans" fill="#fff">PC</text><path d="M6.500 22.500h8.500" stroke="#fff" strokeWidth="1.600" />
  </Svg>
);
const VSCode = () => (
  <Svg w={36} h={36}>
    <path d="M1 13 3.500 10.500 27 27v9L1 15z" fill="#0c8fd4" /><path d="M1 24 27 0v10L4 26.500 1 25z" fill="#0a74bb" />
    <path d="M26 0l10 4v28l-10 4-2-2 2-6V8L24 2z" fill="#27a4f2" />
  </Svg>
);
const Steam = () => (
  <Svg w={34} h={34}>
    <defs><linearGradient id="st" x1="0" y1="0" x2="0" y2="1"><stop offset="0" stopColor="#131a38" /><stop offset=".5" stopColor="#12304f" /><stop offset="1" stopColor="#1583b4" /></linearGradient></defs>
    <circle cx="17" cy="17" r="17" fill="url(#st)" />
    <path d="M0 18l9 3.500 8-4 .5-6a6.500 6.500 0 1 1 6.500 7.500l-6.500 5c0 6-8 6.500-9.500 1.500L.8 22z" fill="#fff" />
    <circle cx="23.500" cy="12.500" r="4.300" fill="#fff" stroke="#16324f" strokeWidth="1.300" /><circle cx="12.500" cy="23.500" r="3.300" stroke="#1b5478" />
  </Svg>
);
const Matlab = () => (
  <Svg w={36} h={36}>
    <defs><linearGradient id="ml" x1="0" y1="0" x2="1" y2="0"><stop offset="0" stopColor="#5a1d12" /><stop offset=".5" stopColor="#d8441c" /><stop offset=".62" stopColor="#ffb446" /><stop offset=".75" stopColor="#d03c18" /><stop offset="1" stopColor="#7c2312" /></linearGradient></defs>
    <path d="M0 20l11-5c4-2 5-5 8-9l-5 18-5 2z" fill="#4b94c8" /><path d="M11 15l6 5-8 6-4-3z" fill="#26618e" />
    <path d="M24 1c4 6 6 20 12 27-5-2-8-1-11 3-3 4-6 5-8 4-1-6-4-8-7-8 6-6 8-20 14-26z" fill="url(#ml)" />
  </Svg>
);
const NetEase = () => (
  <Svg w={36} h={36}>
    <rect width="36" height="36" rx="6.500" fill="#df0a1c" />
    <path d="M24.500 7c-3-2.500-6-.5-5.500 2.500l2.300 10.500c.7 4-6.300 4.500-6.300-.5 0-4 4-6 7.500-5.500 5 .7 7.500 4 7 8.500-.7 5-5.500 8-11 8S7 26 7 20.500c0-4.500 2.500-8 6.500-10" stroke="#fff" strokeWidth="2.800" strokeLinecap="round" />
  </Svg>
);
const Notepad = () => (
  <Svg w={36} h={36}>
    <path d="M30 5l4 25-5 3z" fill="#b98b4c" /><path d="M29 5l4 24-6 4-7-1z" fill="#eef3f4" />
    <path d="M12 4l17 1-4 27L1 28z" fill="#6fabb6" /><path d="M12 4l17 1-2 11L6 19z" fill="#b9e0e6" opacity=".8" /><path d="M1 28l24 4-.5 2.500L1 30z" fill="#e7eef0" />
    <path d="M12 1h17v4.500H12z" fill="#777" opacity=".8" /><path d="M13 1v4M16 1v4M19 1v4M22 1v4M25 1v4M28 1v4" stroke="#ddd" />
  </Svg>
);
const WeChat = () => (
  <Svg w={36} h={34}>
    <path d="M13 1c7 0 13 5 13 11.500S20 24 13 24c-1.500 0-3-.2-4.500-.7L4 26l1-4.500C2 19.500 0 16 0 12.500 0 6 6 1 13 1z" fill="#2fdb6b" />
    <circle cx="8.500" cy="9" r="1.700" fill="#14753a" /><circle cx="18" cy="9" r="1.700" fill="#14753a" />
    <path d="M25 12c6 0 11 4.200 11 9.700 0 3-1.700 5.600-4 7.300l.7 3.500-3.500-2c-1.300.4-2.700.6-4.200.6-6 0-11-4.100-11-9.500S19 12 25 12z" fill="#ececec" />
    <circle cx="21.500" cy="18.500" r="1.400" fill="#888" /><circle cx="29" cy="18.500" r="1.400" fill="#888" />
  </Svg>
);
const Excel = () => (
  <Svg w={33} h={33}>
    <path d="M17 5h14.500v23H17z" fill="#fff" stroke="#217346" strokeWidth="1.600" />
    <path d="M19 9h11M19 13h11M19 17h11M19 21h11M19 25h11" stroke="#217346" strokeWidth="2" strokeDasharray="5 1.500" />
    <path d="M0 3.500 19 0v33L0 29.500z" fill="#1d7044" /><path d="M5.500 10.500 13 22.500M13 10.500 5.500 22.500" stroke="#fff" strokeWidth="2.500" />
  </Svg>
);

const apps = [
  [Folder, "split"], [Chrome, "on"], [VisualStudio, "on"], [PyCharm, ""], [VSCode, "on"], [Steam, ""],
  [Matlab, "split"], [NetEase, ""], [Notepad, "on"], [WeChat, "on"],
];

function Taskbar() {
  return (
    <div className="relative h-[60px] overflow-hidden">
      <Wallpaper />
      <div className="relative flex h-[60px]">
        <div className="flex w-[72px] justify-center pt-[18px]"><Svg w={24} h={24}><path d="M0 3.500 10 2v9.500H0zM11 1.800 24 0v11.500H11zM0 12.500h10V22L0 20.500zM11 12.500h13V24L11 22.200z" fill="#fff" /></Svg></div>
        <div className="flex w-[76px] pt-[18px] pl-[24px]"><Svg w={25} h={25}><circle cx="15.500" cy="8.500" r="8" stroke="#fff" strokeWidth="1.500" /><path d="M10 14.500.5 24" stroke="#fff" strokeWidth="1.700" /></Svg></div>
        {apps.map(([Icon, state], i) => (
          <div key={i} className="flex w-[75px] flex-col items-center">
            <div className="flex h-[57px] items-center pt-[3px] pr-[2px]"><Icon /></div>
            {state === "on" && <div className="h-[3px] w-[61px] bg-[#76b9ed]" />}
            {state === "split" && <div className="flex h-[3px] w-[61px]"><div className="w-[47px] bg-[#76b9ed]" /><div className="w-[2px] bg-[#41688c]" /><div className="flex-1 bg-[#5b90bd]" /></div>}
          </div>
        ))}
        <div className="ml-px flex w-[66px] flex-col items-center bg-white/25">
          <div className="flex h-[57px] items-center pt-[3px] pl-[6px]"><Excel /></div>
          <div className="h-[3px] w-full bg-[#76b9ed]" />
        </div>
        <div className="w-[2px] bg-[#5a4a42]/70" />
        <div className="flex w-[5px] flex-col justify-end bg-[#8a8270]/60"><div className="h-[3px] bg-[#5b9bd0]" /></div>
        <Svg w={20} h={12} className="mt-[24px] ml-[645px]"><path d="M1 10 10 1l9 9" stroke="#fff" strokeWidth="1.300" /></Svg>
        <Svg w={20} h={20} className="mt-[22px] ml-[18px]">
          <path d="M1 18C2 8 9 1.500 18 1M5.500 18C6 11 11 6.500 18 6M10 18c.5-4 3.500-7 8-7.500" stroke="#fff" strokeWidth="1.200" opacity=".8" /><path d="M14 18c.3-2 1.800-3.500 4-4" stroke="#fff" strokeWidth="1.200" /><circle cx="16.500" cy="16.500" r="1.700" fill="#fff" />
        </Svg>
        <Svg w={25} h={17} className="mt-[21px] ml-[12px]">
          <path d="M6 4h17v12H6z" fill="none" stroke="#fff" strokeWidth="1.300" /><path d="M8 6h13v8H8zM23.500 8H25v4h-1.500z" fill="#fff" />
          <path d="M2.500 0v4M6.500 0v4M1 3.500h7v3a3.500 3 0 0 1-7 0zM4.500 9.500V16" stroke="#fff" strokeWidth="1.200" />
        </Svg>
        <Svg w={24} h={18} className="mt-[21px] ml-[12px]">
          <path d="M.7 5.500H4L9 .8v16.400L4 12.500H.7z" stroke="#fff" strokeWidth="1.200" /><path d="M12 6c1.300 2 1.300 4 0 6" stroke="#fff" strokeWidth="1.200" />
          <path d="M15 3.500c3 3.500 3 7.500 0 11M18.500 1c4 5 4 11 0 16" stroke="#fff" strokeWidth="1.200" opacity=".5" />
        </Svg>
        <Svg w={24} h={26} className="mt-[17px] ml-[9px]">
          <path d="M2.500 7.500h19v10h-19zM12 1.500v22" stroke="#444" strokeWidth="4.500" /><path d="M2.500 7.500h19v10h-19zM12 1.500v22" stroke="#fff" strokeWidth="2.300" />
        </Svg>
        <Svg w={24} h={24} className="mt-[18px] ml-[20px]">
          <rect x="1.500" y="1.500" width="21" height="21" rx="3" fill="#f4551f" transform="rotate(-10 12 12)" />
          <path d="M18.500 6.500C13 5 6.500 6 6.500 9.300c0 3 10.500 2.200 10.500 5.200 0 2.800-6 3.500-11.500 2.300" stroke="#fff" strokeWidth="3" />
        </Svg>
        <Svg w={25} h={25} className="mt-[17px] ml-[33px]"><path d="M.7 1.700h23v18h-8.200L12 23.500l-3.500-3.800H.7z" stroke="#fff" strokeWidth="1.300" /></Svg>
        <div className="ml-[29px] w-[2px] bg-white/30" />
      </div>
    </div>
  );
}

export default function App() {
  return (
    <div className={`relative h-[1080px] w-[1920px] overflow-hidden bg-[#217346] ${UI}`}>
      <TitleBar />
      <TabBar />
      <Ribbon />
      <FormulaBar />
      <Sheet />
      <SheetTabs />
      <StatusBar />
      <Taskbar />
      <div className="pointer-events-none absolute top-[902px] left-[1541px] z-30 whitespace-nowrap text-[#8a8a8a]/60">
        <div className="text-[30px] leading-[42px]">激活<span className="tracking-[0.75px]"> Windows</span></div>
        <div className="text-[21.3px] leading-[28px] tracking-[0.6px]">转到“设置”以激活 Windows。</div>
      </div>
    </div>
  );
}
